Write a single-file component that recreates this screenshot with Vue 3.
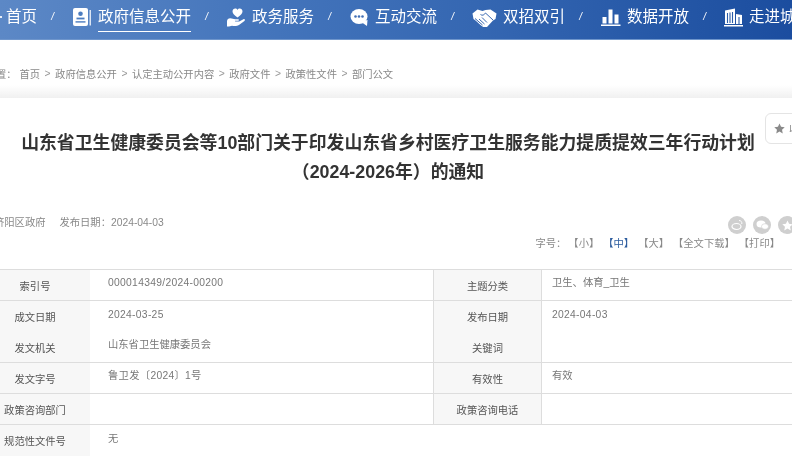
<script setup>
const crumbs = ['首页', '政府信息公开', '认定主动公开内容', '政府文件', '政策性文件', '部门公文']
const rows = [
  { a: '索引号', b: '000014349/2024-00200', c: '主题分类', d: '卫生、体育_卫生', line: true, numB: true },
  { a: '成文日期', b: '2024-03-25', c: '发布日期', d: '2024-04-03', line: false, numB: true, numD: true },
  { a: '发文机关', b: '山东省卫生健康委员会', c: '关键词', d: '', line: true },
  { a: '发文字号', b: '鲁卫发〔2024〕1号', c: '有效性', d: '有效', line: true, numB: true },
  { a: '政策咨询部门', b: '', c: '政策咨询电话', d: '', line: true }
]
</script>

<template>
  <div class="page">
    <nav class="nav">
      <span class="stub"></span>
      <span class="item">首页</span>
      <i class="sep">/</i>
      <span class="item">
        <svg class="ic" width="20" height="20" viewBox="0 0 20 20">
          <rect x="1" y="1" width="15" height="18" rx="2" fill="#fff" />
          <rect x="17.6" y="3" width="1.2" height="15.5" fill="#fff" />
          <circle cx="8.5" cy="6.8" r="2.3" fill="#4c7dc0" />
          <rect x="4.5" y="10.6" width="8" height="1.8" fill="#4c7dc0" />
          <rect x="3.5" y="14.2" width="10" height="1.4" fill="#4c7dc0" />
        </svg>
        <b class="active">政府信息公开</b>
      </span>
      <i class="sep">/</i>
      <span class="item">
        <svg class="ic" width="20" height="20" viewBox="0 0 20 20">
          <path d="M11.5 10.5C8 8 6.5 6.5 6.5 4.3 6.5 2.6 7.8 1.5 9.2 1.5c1 0 1.8.5 2.3 1.4.5-.9 1.3-1.4 2.3-1.4 1.4 0 2.7 1.1 2.7 2.8 0 2.2-1.5 3.7-5 6.2z" fill="#fff" />
          <path d="M1 14.3c0-1.7 1.5-3 3.2-3 2 0 3.3.9 5 .9h3c1 0 1 1.6 0 1.6H9l.2.7h4l4.2-2.3c1.3-.6 2.2.8 1 1.8l-4.700 3.500c-2.200 1.500-5 1.800-7.700 1.300L3 19.500H1z" fill="#fff" />
        </svg>
        <b>政务服务</b>
      </span>
      <i class="sep">/</i>
      <span class="item">
        <svg class="ic" width="20" height="20" viewBox="0 0 20 20">
          <ellipse cx="10" cy="9.500" rx="8.500" ry="7.500" fill="#fff" />
          <path d="M14 14l4.500-1-.5 6-5-3.500z" fill="#fff" />
          <circle cx="6.500" cy="9.500" r="1.300" fill="#4270b6" />
          <circle cx="10" cy="9.500" r="1.300" fill="#4270b6" />
          <circle cx="13.500" cy="9.500" r="1.300" fill="#4270b6" />
        </svg>
        <b>互动交流</b>
      </span>
      <i class="sep">/</i>
      <span class="item">
        <svg class="ic" width="25" height="20" viewBox="0 0 25 20">
          <path d="M0.500 6.500L5.500 2.500l5 1.500 3-1 5-.5 6 4-1 5.500-2.500 1.500-6 6.500-2.500 1-4-3-5-4.500-2-1.500z" fill="#fff" />
          <path d="M8.500 7.500c1.800 1.500 3.700.5 5-1.500l7.500 7M3 11.500l7.500 6.500M7 12l5.500 5M10 10.500l5 5" fill="none" stroke="#3a69b2" stroke-width="1" />
        </svg>
        <b>双招双引</b>
      </span>
      <i class="sep">/</i>
      <span class="item">
        <svg class="ic" width="21" height="20" viewBox="0 0 21 20">
          <rect x="1" y="17.500" width="19.500" height="1.500" fill="#fff" />
          <rect x="2.500" y="10" width="4" height="6.500" fill="#fff" />
          <rect x="8.500" y="2.500" width="4" height="14" fill="#fff" />
          <rect x="14.500" y="7.500" width="4" height="9" fill="#fff" />
        </svg>
        <b>数据开放</b>
      </span>
      <i class="sep">/</i>
      <span class="item">
        <svg class="ic" width="19" height="20" viewBox="0 0 19 20">
          <path d="M1 17V3.500L11 1.500V17zM12 7l6 1v9h-6z" fill="#fff" />
          <rect x="0" y="18" width="19" height="1.500" fill="#fff" />
          <path d="M3.500 6v10M6 5.500v10.500M8.500 5v11M15 10v7" stroke="#2a5ca8" stroke-width="1.100" />
        </svg>
        <b>走进城阳</b>
      </span>
    </nav>

    <div class="crumbs">
      <span class="here">当前位置：</span>
      <template v-for="(c, i) in crumbs" :key="c">
        <span v-if="i" class="gt">&gt;</span>
        <span>{{ c }}</span>
      </template>
    </div>

    <main class="article">
      <aside class="fav">
        <svg width="11" height="11" viewBox="0 0 24 24"><path d="M12 1l3.400 7.400 8 .9-5.900 5.500 1.600 8L12 18.800 4.900 22.800l1.600-8L.6 9.300l8-.9z" fill="#8a8a8a" /></svg>
        <span>收藏</span>
      </aside>

      <h1 class="title">山东省卫生健康委员会等10部门关于印发山东省乡村医疗卫生服务能力提质提效三年行动计划<br />（2024-2026年）的通知</h1>

      <div class="meta">
        <div class="source">
          <span>济阳区政府</span>
          <span>发布日期：2024-04-03</span>
        </div>
        <div class="tools">
          <div class="share">
            <span class="dot"><svg width="12" height="12" viewBox="0 0 12 12"><ellipse cx="5.500" cy="7.500" rx="4.500" ry="3" fill="none" stroke="#fff" stroke-width="1.200" /><path d="M8 1.500c2 0 3.200 1.500 2.800 3.500" fill="none" stroke="#fff" /></svg></span>
            <span class="dot"><svg width="13" height="12" viewBox="0 0 13 12"><ellipse cx="5" cy="5" rx="4.500" ry="3.500" fill="#fff" /><ellipse cx="9" cy="7.500" rx="3.500" ry="2.800" fill="#fff" stroke="#ccc" stroke-width=".6" /></svg></span>
            <span class="dot"><svg width="11" height="11" viewBox="0 0 24 24"><path d="M12 1l3.400 7.400 8 .9-5.900 5.500 1.600 8L12 18.800 4.900 22.800l1.600-8L.6 9.300l8-.9z" fill="#fff" /></svg></span>
          </div>
          <div class="sizes">
            <span>字号：</span>
            <span>【小】</span>
            <span class="on">【中】</span>
            <span>【大】</span>
            <span>【全文下载】</span>
            <span>【打印】</span>
          </div>
        </div>
      </div>

      <div class="info">
        <template v-for="r in rows" :key="r.a">
          <div class="lab" :class="{ line: r.line }"><span>{{ r.a }}</span></div>
          <div class="val" :class="{ line: r.line, num: r.numB }">{{ r.b }}</div>
          <div class="lab mid" :class="{ line: r.line }"><span>{{ r.c }}</span></div>
          <div class="val end" :class="{ line: r.line, num: r.numD }">{{ r.d }}</div>
        </template>
        <div class="lab"><span>规范性文件号</span></div>
        <div class="val">无</div>
      </div>
    </main>
  </div>
</template>

<style scoped>
.page {
  position: relative;
  width: 792px;
  height: 474px;
  overflow: hidden;
  background: #fff;
  font-family: "Liberation Sans", "Noto Sans CJK SC", sans-serif;
  font-size: 10.3px;
  color: #666;
  filter: blur(0.35px);
}

.nav {
  display: flex;
  align-items: center;
  box-sizing: border-box;
  height: 40px;
  padding-bottom: 5px;
  background: linear-gradient(90deg, #5c88c6 0%, #4374bb 35%, #3567b2 60%, #1b4d9f 100%);
  border-bottom: 1px solid #6f96cc;
  white-space: nowrap;
  color: #fff;
  font-size: 15.5px;
  line-height: 20px;
}
.stub {
  flex: none;
  width: 2px;
  height: 1.5px;
  margin-right: 4px;
  background: #e8eef7;
}
.item {
  flex: none;
  display: flex;
  align-items: center;
  gap: 6px;
}
.item b {
  font-weight: 400;
}
.ic {
  flex: none;
  display: block;
}
.active {
  position: relative;
}
.active::after {
  content: "";
  position: absolute;
  left: 0;
  right: 0;
  bottom: -5px;
  height: 1.5px;
  background: #fff;
}
.sep {
  flex: none;
  width: 3px;
  margin: 0 18px 0 14px;
  font-size: 10px;
  font-style: italic;
  text-align: center;
}

.crumbs {
  display: flex;
  align-items: center;
  box-sizing: border-box;
  height: 58px;
  margin-left: -35px;
  padding-top: 8px;
  white-space: nowrap;
  color: #888;
  background: linear-gradient(180deg, #fff 78%, #f0f0f0 100%);
}
.here {
  margin-right: 3px;
}
.gt {
  margin: 0 4.5px;
  color: #999;
}

.article {
  position: relative;
  padding-top: 31px;
}
.fav {
  position: absolute;
  top: 15px;
  left: 765px;
  display: flex;
  align-items: center;
  gap: 4px;
  box-sizing: border-box;
  width: 70px;
  height: 31px;
  padding-left: 8px;
  border: 1px solid #e4e4e4;
  border-radius: 6px;
  background: #fff;
  font-size: 10.5px;
  color: #888;
}
.title {
  width: 776px;
  margin: 0;
  text-align: center;
  font-size: 17.85px;
  line-height: 29px;
  font-weight: 700;
  color: #333;
  white-space: nowrap;
}

.meta {
  display: flex;
  justify-content: space-between;
  align-items: flex-start;
  margin: 29px 12px 0 -6px;
}
.source {
  display: flex;
  gap: 14px;
  padding-top: 1px;
  line-height: 12px;
  color: #888;
}
.share {
  display: flex;
  justify-content: flex-end;
  gap: 7px;
  margin-right: -16px;
}
.dot {
  display: flex;
  align-items: center;
  justify-content: center;
  width: 18px;
  height: 18px;
  border-radius: 50%;
  background: #cfcfcf;
}
.sizes {
  display: flex;
  gap: 4px;
  margin-top: 3px;
  line-height: 14px;
  color: #888;
  white-space: nowrap;
}
.sizes span:first-child {
  margin-right: -2px;
}
.on {
  color: #2c5c9e;
}

.info {
  display: grid;
  grid-template-columns: 110px 343px 109px 250px;
  grid-auto-rows: 31px;
  margin: 18px 0 0 -20px;
  border-top: 1px solid #ddd;
}
.lab,
.val {
  box-sizing: border-box;
  display: flex;
  align-items: center;
  line-height: 14px;
}
.lab {
  justify-content: center;
  background: #f7f7f7;
  color: #555;
  padding-top: 3px;
}
.val {
  padding: 0 0 4px 18px;
  color: #777;
}
.num {
  letter-spacing: 0.3px;
}
.mid {
  border-left: 1px solid #ddd;
  border-right: 1px solid #ddd;
}
.end {
  padding-left: 10px;
}
.line {
  border-bottom: 1px solid #ddd;
}
</style>
